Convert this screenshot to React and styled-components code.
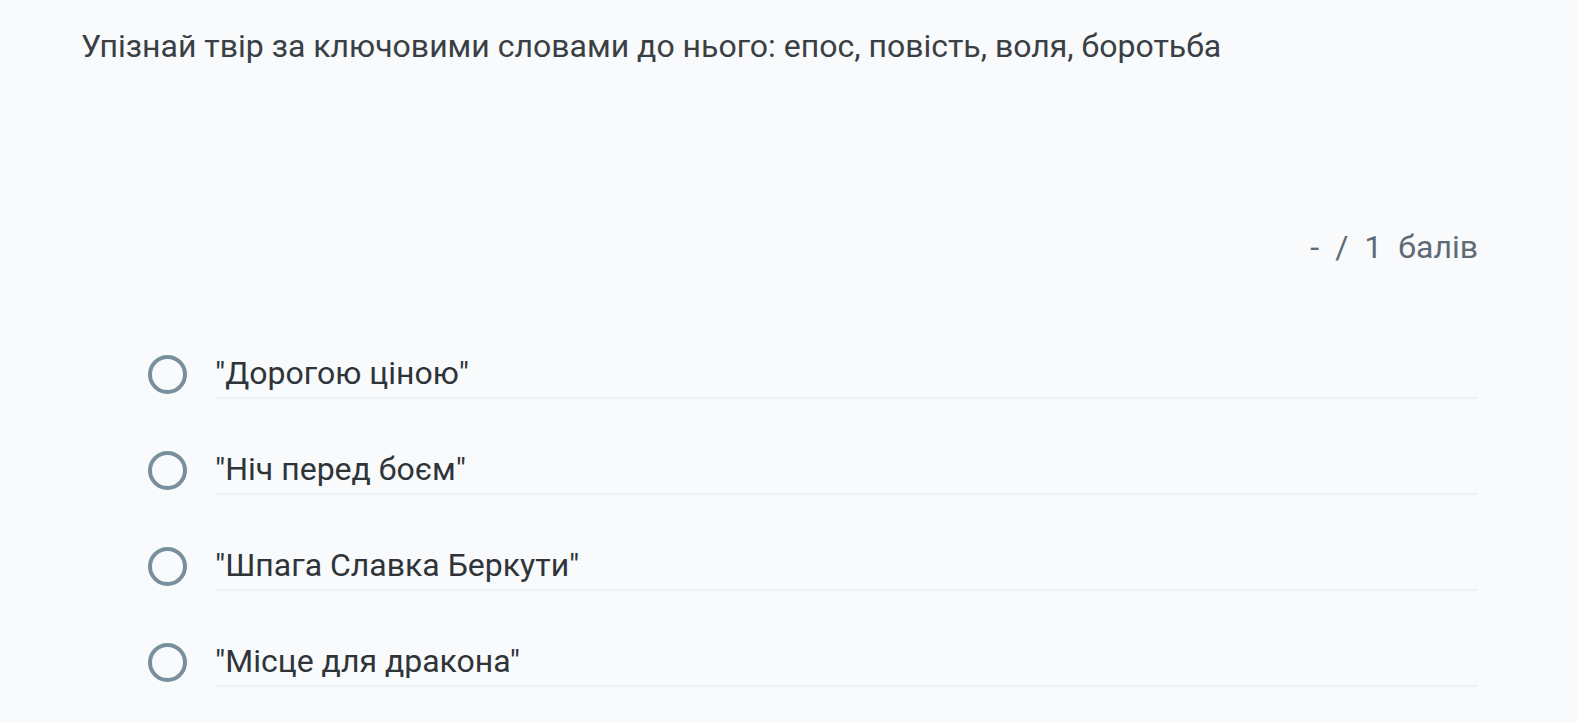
import React from "react";
import styled, { createGlobalStyle } from "styled-components";

const GlobalStyle = createGlobalStyle`
  html, body {
    margin: 0;
    padding: 0;
    background: #f8fafc;
  }
  body {
    font-family: Roboto, "Liberation Sans", sans-serif;
  }
`;

const options = [
  "\"Дорогою ціною\"",
  "\"Ніч перед боєм\"",
  "\"Шпага Славка Беркути\"",
  "\"Місце для дракона\"",
];

export default function App() {
  return (
    <>
      <GlobalStyle />
      <Page>
        <Question>
          Упізнай твір за ключовими словами до нього: епос, повість, воля, боротьба
        </Question>
        <Score>
          <span>-</span>
          <span>/</span>
          <span>1</span>
          <span>балів</span>
        </Score>
        <Options>
          {options.map(text => (
            <Option key={text}>
              <Radio />
              <Label>{text}</Label>
            </Option>
          ))}
        </Options>
      </Page>
    </>
  );
}

const Page = styled.div`
  min-height: 723px;
  box-sizing: border-box;
  padding: 26px 99px 0 81px;
  background: #f8fafc;
`;

const Question = styled.div`
  font-size: 32px;
  line-height: 40px;
  color: #3a3f44;
`;

const Score = styled.div`
  display: flex;
  justify-content: flex-end;
  gap: 16px;
  margin-top: 161px;
  font-size: 32px;
  line-height: 40px;
  color: #5f6b74;
`;

const Options = styled.div`
  display: flex;
  flex-direction: column;
  margin-top: 59px;
  padding-left: 67px;
`;

const Option = styled.label`
  display: flex;
  align-items: center;
  gap: 28px;
  height: 96px;
`;

const Radio = styled.span`
  flex: none;
  box-sizing: border-box;
  width: 39px;
  height: 39px;
  border-radius: 50%;
  border: 4px solid #78909c;
`;

const Label = styled.div`
  flex: 1;
  font-size: 32px;
  line-height: 48px;
  color: #2f3438;
  border-bottom: 2px solid #eef1f3;
`;
